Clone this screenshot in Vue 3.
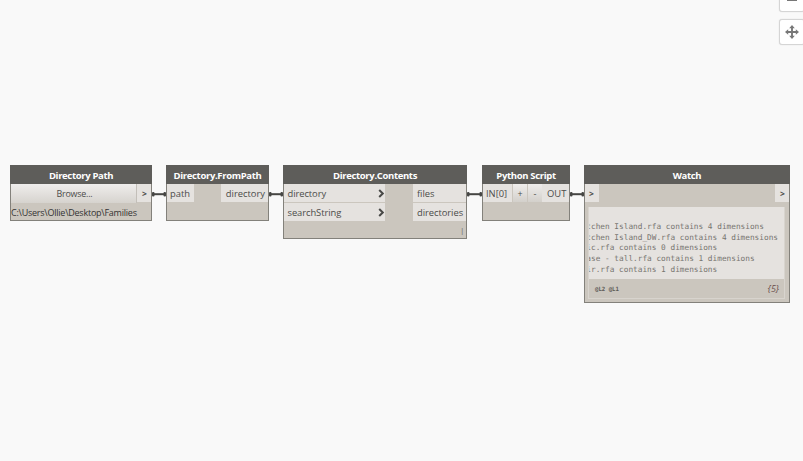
<script setup>
const wires = [
  [152, 166],
  [269, 283],
  [467, 482],
  [570, 584],
]
const lines = [
  'tchen Island.rfa contains 4 dimensions',
  'tchen Island_DW.rfa contains 4 dimensions',
  'ic.rfa contains 0 dimensions',
  'ase - tall.rfa contains 1 dimensions',
  'ir.rfa contains 1 dimensions',
]
</script>

<template>
  <main class="canvas">
    <section class="node path-node">
      <h2>Directory Path</h2>
      <div class="row">
        <button class="browse">Browse...</button>
        <span class="port chevron">&gt;</span>
      </div>
      <p class="file-path">C:\Users\Ollie\Desktop\Families</p>
    </section>

    <section class="node from-node">
      <h2>Directory.FromPath</h2>
      <div class="row spread">
        <span class="port path-port">path</span>
        <span class="port dir-port">directory</span>
      </div>
    </section>

    <section class="node contents-node">
      <h2>Directory.Contents</h2>
      <div class="row spread">
        <div class="inputs">
          <span v-for="name in ['directory', 'searchString']" :key="name" class="port input">
            {{ name }}
            <svg width="7" height="9" viewBox="0 0 7 9"><path d="M1.2 1 L4.8 4.5 L1.2 8" fill="none" stroke="#484846" stroke-width="2" /></svg>
          </span>
        </div>
        <div class="outputs">
          <span class="port">files</span>
          <span class="port">directories</span>
        </div>
      </div>
      <div class="lacing">|</div>
    </section>

    <section class="node python-node">
      <h2>Python Script</h2>
      <div class="row">
        <span class="port in-port">IN[0]</span>
        <button class="small">+</button>
        <button class="small minus">-</button>
        <span class="port out-port">OUT</span>
      </div>
    </section>

    <section class="node watch-node">
      <h2>Watch</h2>
      <div class="row spread">
        <span class="port chevron left">&gt;</span>
        <span class="port chevron">&gt;</span>
      </div>
      <div class="watch">
        <div class="output"><p v-for="line in lines" :key="line">{{ line }}</p></div>
        <footer><span class="levels">@L2 @L1</span><span class="count">{5}</span></footer>
      </div>
    </section>

    <svg class="wires" width="803" height="461">
      <g v-for="[a, b] in wires" :key="a" fill="#464644">
        <rect :x="a" y="193.2" :width="b - a" height="2" />
        <rect :x="a" y="192" width="2.5" height="4.4" rx="1" />
        <rect :x="b - 2.5" y="192" width="2.5" height="4.4" rx="1" />
      </g>
    </svg>

    <nav class="tools">
      <button class="tool">
        <svg width="12" height="12" viewBox="0 0 12 12"><path d="M1 7H11" stroke="#777" stroke-width="2" /></svg>
      </button>
      <button class="tool">
        <svg width="14" height="14" viewBox="0 0 14 14">
          <path d="M7 2V12M2 7H12" stroke="#777" stroke-width="1.9" />
          <path d="M7 0L9.8 3.2H4.2ZM7 14L4.2 10.8H9.8ZM0 7L3.2 4.2V9.8ZM14 7L10.8 9.8V4.2Z" fill="#777" />
        </svg>
      </button>
    </nav>
  </main>
</template>

<style>
body { margin: 0; background: #f9f9f9; }
</style>

<style scoped>
* { box-sizing: border-box; }
.canvas {
  position: relative;
  width: 803px;
  height: 461px;
  overflow: hidden;
  background: #f9f9f9;
  color: #4c4c4a;
  font: 9.4px "Open Sans", "Noto Sans", sans-serif;
}
.node {
  position: absolute;
  top: 165px;
  height: 56px;
  border: 1px solid #83817b;
  border-top: 0;
  background: #cbc6be;
}
.path-node { left: 10px; width: 142px; }
.from-node { left: 166px; width: 103px; }
.contents-node { left: 283px; width: 184px; height: 74px; }
.python-node { left: 482px; width: 88px; }
.watch-node { left: 584px; width: 206px; height: 138px; }
h2 {
  height: 19px;
  margin: 0 -1px;
  padding-top: 1px;
  background: #5e5d5a;
  color: #fff;
  font-size: 9.5px;
  font-weight: 700;
  letter-spacing: -0.34px;
  line-height: 19px;
  text-align: center;
  white-space: nowrap;
}
button {
  padding: 0;
  border: 0;
  color: inherit;
  font: inherit;
}
.row { display: flex; }
.spread { justify-content: space-between; }
.port {
  display: block;
  height: 18px;
  background: #e5e2df;
  line-height: 19px;
  white-space: nowrap;
}
.chevron { width: 14px; padding-left: 1px; text-align: center; font-size: 8.5px; font-weight: 700; }
.chevron.left { padding: 0 1px 0 0; }
.browse {
  flex: 1;
  height: 19px;
  border-right: 1px solid #c3bfb9;
  background: linear-gradient(#efedec, #d6d3ce);
  font-size: 8.9px;
  letter-spacing: -0.2px;
  line-height: 18px;
  padding-left: 2px;
}
.file-path {
  margin: 0;
  font-size: 9px;
  letter-spacing: -0.23px;
  line-height: 20px;
  color: #333;
  white-space: nowrap;
}
.path-port { width: 27px; padding-left: 3px; }
.dir-port { width: 47px; padding-right: 3px; display: flex; justify-content: flex-end; }
.inputs, .outputs { display: flex; flex-direction: column; gap: 1px; }
.input {
  display: flex;
  align-items: center;
  justify-content: space-between;
  width: 101px;
  padding-left: 3.5px;
  letter-spacing: -0.07px;
}
.outputs .port { width: 53px; padding-left: 4px; letter-spacing: -0.05px; }
.lacing { padding: 4px 2px 0 0; text-align: right; font-size: 7px; line-height: 12px; color: #555; }
.in-port { width: 29px; padding-left: 3px; }
.out-port { flex: 1; padding-left: 5px; }
.small {
  width: 15px;
  height: 18px;
  border-left: 1px solid #cbc6be;
  background: linear-gradient(#efedec, #d3d0cb);
  font-size: 9px;
  line-height: 17px;
}
.watch {
  height: 92px;
  margin: 5px 4px 0 3px;
  border: 1px solid #d8d4ce;
  border-top: 0;
}
.output {
  height: 72px;
  padding-top: 15px;
  overflow: hidden;
  background: #e5e2df;
}
.output p {
  margin: 0 0 0 -2.7px;
  font: 7.78px/10.67px "DejaVu Sans Mono", monospace;
  color: #777570;
  white-space: pre;
}
footer {
  display: flex;
  align-items: center;
  justify-content: space-between;
  height: 19px;
  padding: 0 5px 0 6px;
}
.levels { font: 700 5.7px "DejaVu Sans Mono", monospace; color: #5b5955; }
.count { font-size: 9px; font-style: italic; color: #694b4a; }
.wires { position: absolute; top: 0; left: 0; pointer-events: none; }
.tools {
  position: absolute;
  top: -14px;
  left: 779px;
  display: flex;
  flex-direction: column;
  gap: 7px;
}
.tool {
  display: grid;
  place-items: center;
  width: 26px;
  height: 26px;
  border: 1px solid #d5d5d5;
  border-radius: 3px;
  background: #fff;
  box-shadow: 0 0 1px #ccc;
}
</style>
